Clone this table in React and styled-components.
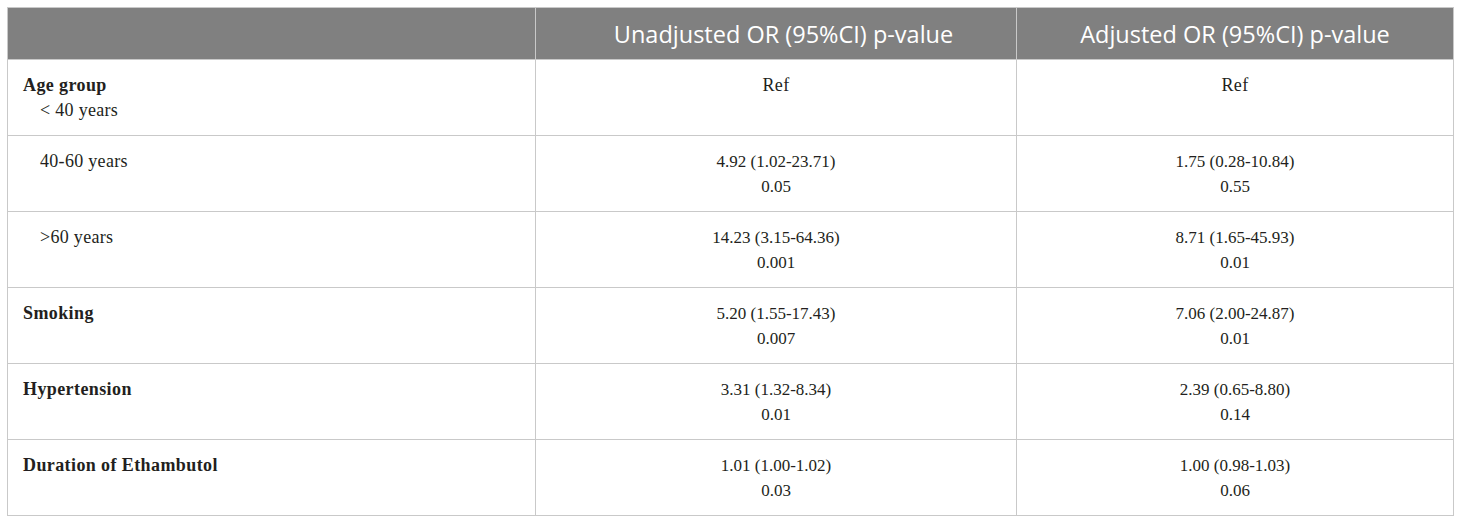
import React from "react";
import styled, { createGlobalStyle } from "styled-components";

const GlobalStyle = createGlobalStyle`
  html, body {
    margin: 0;
    padding: 0;
    background: #ffffff;
  }
`;

const rows = [
  { label: "Age group", sub: "< 40 years", un: ["Ref"], adj: ["Ref"] },
  { sub: "40-60 years", un: ["4.92 (1.02-23.71)", "0.05"], adj: ["1.75 (0.28-10.84)", "0.55"] },
  { sub: ">60 years", un: ["14.23 (3.15-64.36)", "0.001"], adj: ["8.71 (1.65-45.93)", "0.01"] },
  { label: "Smoking", un: ["5.20 (1.55-17.43)", "0.007"], adj: ["7.06 (2.00-24.87)", "0.01"] },
  { label: "Hypertension", un: ["3.31 (1.32-8.34)", "0.01"], adj: ["2.39 (0.65-8.80)", "0.14"] },
  { label: "Duration of Ethambutol", un: ["1.01 (1.00-1.02)", "0.03"], adj: ["1.00 (0.98-1.03)", "0.06"] },
];

const Page = styled.div`
  padding: 7px;
`;

const Table = styled.table`
  width: 1445px;
  border-collapse: collapse;
  table-layout: fixed;
  font-family: "Liberation Serif", "Times New Roman", serif;
  color: #231f20;
`;

const HeadCell = styled.th`
  height: 51px;
  padding: 0 0 0 ${(p) => p.$shift || 0}px;
  background: #808080;
  border: 1px solid #c9c9c9;
  color: #ffffff;
  font-family: "Open Sans", "Noto Sans", sans-serif;
  font-size: 23.5px;
  font-weight: 400;
  text-align: center;
  vertical-align: middle;
  width: ${(p) => p.$w - (p.$shift || 0)}px;
`;

const Cell = styled.td`
  height: 76px;
  box-sizing: border-box;
  padding: 13px 15px 0;
  border: 1px solid #c9c9c9;
  vertical-align: top;
  font-size: 17px;
  line-height: 25px;
  text-align: ${(p) => (p.$center ? "center" : "left")};
`;

const Label = styled.div`
  font-size: 18px;
  font-weight: 700;
  letter-spacing: 0.4px;
`;

const Sub = styled.div`
  padding-left: 17px;
  font-size: 18px;
  letter-spacing: 0.3px;
`;

const Line = styled.div`
  font-size: ${(p) => (p.$word ? 18 : 17)}px;
  letter-spacing: ${(p) => (p.$word ? 0.4 : 0)}px;
`;

const Values = ({ items }) =>
  items.map((t) => (
    <Line key={t} $word={/^[A-Za-z]/.test(t)}>
      {t}
    </Line>
  ));

export default function App() {
  return (
    <Page>
      <GlobalStyle />
      <Table>
        <thead>
          <tr>
            <HeadCell $w={527} />
            <HeadCell $w={480} $shift={15}>
              Unadjusted OR (95%CI) p-value
            </HeadCell>
            <HeadCell $w={436}>Adjusted OR (95%CI) p-value</HeadCell>
          </tr>
        </thead>
        <tbody>
          {rows.map((r, i) => (
            <tr key={i}>
              <Cell>
                {r.label && <Label>{r.label}</Label>}
                {r.sub && <Sub>{r.sub}</Sub>}
              </Cell>
              <Cell $center>
                <Values items={r.un} />
              </Cell>
              <Cell $center>
                <Values items={r.adj} />
              </Cell>
            </tr>
          ))}
        </tbody>
      </Table>
    </Page>
  );
}
